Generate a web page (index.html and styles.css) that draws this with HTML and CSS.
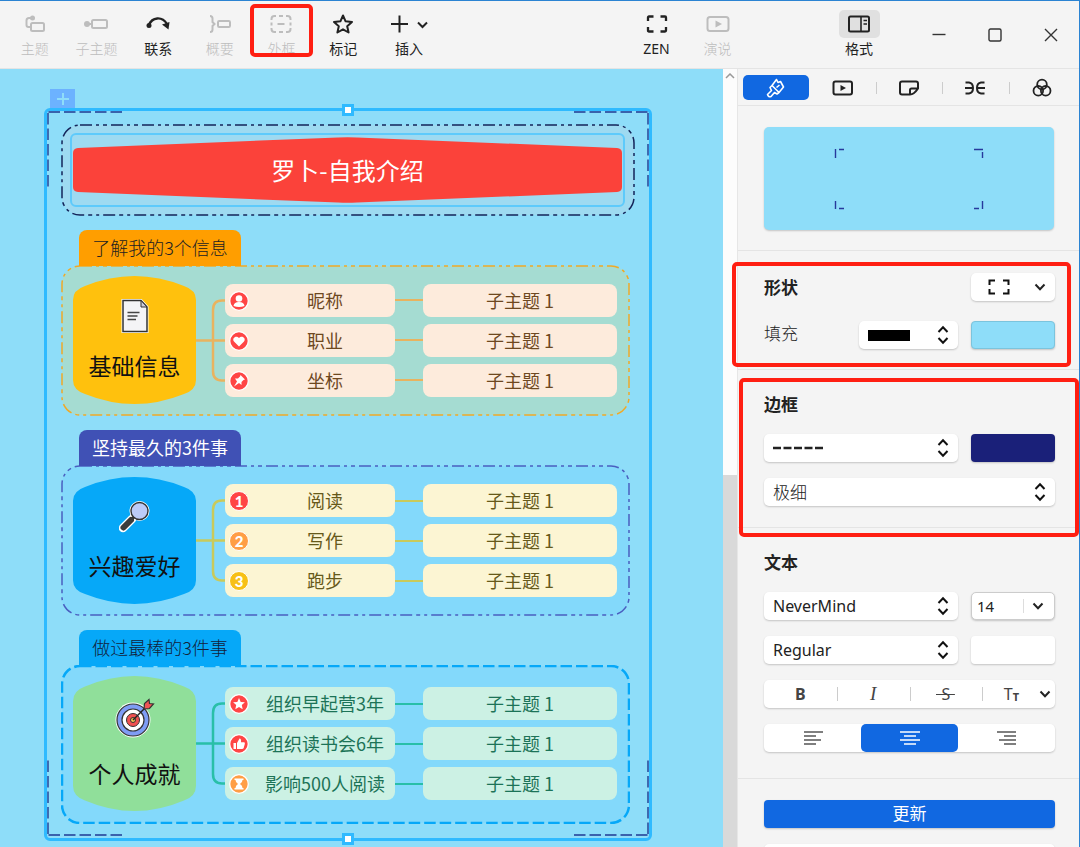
FILE: index.html
```html
<!DOCTYPE html>
<html lang="zh-CN">
<head>
<meta charset="utf-8">
<meta name="viewport" content="width=device-width, initial-scale=1">
<title>罗卜-自我介绍</title>
<link rel="stylesheet" href="styles.css">
</head>
<body>
<svg class="defs" aria-hidden="true">
  <symbol id="updown" viewBox="0 0 12 20"><path d="M1.500 7 6 2.300 10.500 7M1.500 13 6 17.700 10.500 13" fill="none" stroke="#111" stroke-width="2"/></symbol>
  <symbol id="down" viewBox="0 0 12 8"><path d="M1.500 1.500 6 6.200 10.500 1.500" fill="none" stroke="#222" stroke-width="2"/></symbol>
  <symbol id="barrel" viewBox="0 0 123 128" preserveAspectRatio="none"><path d="M12 10Q61.500-10 111 10 123 14 123 24V104Q123 114 111 118 61.500 138 12 118 0 114 0 104V24Q0 14 12 10Z" fill="currentColor"/></symbol>
  <symbol id="bracket" viewBox="0 0 29 113"><path d="M0 56.500H29M29 16.500H26Q17 16.500 17 26V87Q17 96.500 26 96.500H29" fill="none" stroke="currentColor" stroke-width="2.500"/></symbol>
  <symbol id="disc" viewBox="0 0 20 20"><circle cx="10" cy="10" r="9.300" fill="currentColor" stroke="#fff" stroke-width="1.300"/></symbol>
</svg>

<div class="app">
  <header class="toolbar">
    <nav class="tools">
      <button class="tool off"><svg width="22" height="20" viewBox="0 0 22 20"><path d="M7 13H4.500Q2.500 13 2.500 11V6.500Q2.500 4 5 4H8" /><rect x="7" y="9" width="13" height="8" rx="1.500"/><circle class="dot" cx="8.500" cy="4" r="2.500"/></svg><span>主题</span></button>
      <button class="tool off"><svg width="26" height="20" viewBox="0 0 26 20"><path d="M4 10H9"/><rect x="9" y="6" width="15" height="8" rx="1.500"/><circle class="dot" cx="4" cy="10" r="3"/></svg><span>子主题</span></button>
      <button class="tool"><svg width="26" height="20" viewBox="0 0 26 20"><path d="M4 11C7 3 17 2 22 10" stroke-width="2.300"/><circle class="dot" cx="4" cy="11.500" r="2.500"/><path class="dot" d="M17 10.500 24.500 8 23.500 15.500Z"/></svg><span>联系</span></button>
      <button class="tool off"><svg width="24" height="20" viewBox="0 0 24 20"><path d="M2 2Q4.500 2 4.500 4.500V8L6.500 10 4.500 12V15.500Q4.500 18 2 18"/><rect x="10" y="7" width="12" height="6" rx="1.200"/></svg><span>概要</span></button>
      <button class="tool off marked"><svg width="22" height="20" viewBox="0 0 22 20"><path d="M1.500 6V5Q1.500 2 4.500 2H6M9 2H13M16 2H17.500Q20.500 2 20.500 5V6M20.500 8.500V11.500M20.500 14V15Q20.500 18 17.500 18H16M13 18H9M6 18H4.500Q1.500 18 1.500 15V14M1.500 11.500V8.500M7.500 10H14.500"/></svg><span>外框</span></button>
      <button class="tool"><svg width="22" height="20" viewBox="0 0 22 20"><path d="M11 1.500 13.600 7.300 20 8 15.200 12.200 16.600 18.500 11 15.300 5.400 18.500 6.800 12.200 2 8 8.400 7.300Z" stroke-linejoin="round"/></svg><span>标记</span></button>
    </nav>
    <button class="tool insert"><svg width="40" height="20" viewBox="0 0 40 20"><path d="M2 10H19M10.500 1.500V18.500M29 8.500 33.500 13 38 8.500"/></svg><span>插入</span></button>
    <div class="modes">
      <button class="tool"><svg width="22" height="20" viewBox="0 0 22 20"><path d="M2 7V3.500Q2 2.500 3 2.500H7.500M14.500 2.500H19Q20 2.500 20 3.500V7M20 13V16.500Q20 17.500 19 17.500H14.500M7.500 17.500H3Q2 17.500 2 16.500V13" stroke-width="2.300"/></svg><span>ZEN</span></button>
      <button class="tool off"><svg width="24" height="20" viewBox="0 0 24 20"><rect x="1.500" y="3" width="21" height="14" rx="2.500"/><path class="dot" d="M9.500 6.500 16 10 9.500 13.500Z"/></svg><span>演说</span></button>
    </div>
    <button class="tool format"><i class="chip"><svg width="22" height="18" viewBox="0 0 22 18"><rect x="1" y="1.500" width="20" height="15" rx="1.500"/><path d="M13 2V16M15.500 5.500H19M15.500 9H19" stroke-width="1.600"/></svg></i><span>格式</span></button>
    <div class="window-buttons">
      <button aria-label="最小化"><svg width="14" height="14" viewBox="0 0 14 14"><path d="M0.500 6.500H13.500"/></svg></button>
      <button aria-label="最大化"><svg width="14" height="14" viewBox="0 0 14 14"><rect x="1" y="1" width="12" height="12" rx="1.500"/></svg></button>
      <button aria-label="关闭"><svg width="14" height="14" viewBox="0 0 14 14"><path d="M1 1 13 13M13 1 1 13"/></svg></button>
    </div>
  </header>

  <div class="work">
    <main class="canvas">
      <section class="sheet">
        <span class="add" aria-hidden="true"></span>
        <svg class="corner tl" viewBox="0 0 76 76"><path d="M1.500 1H76M1 2V76"/></svg>
        <svg class="corner tr" viewBox="0 0 76 76"><path d="M1.500 1H76M1 2V76"/></svg>
        <svg class="corner bl" viewBox="0 0 76 76"><path d="M1.500 1H76M1 2V76"/></svg>
        <svg class="corner br" viewBox="0 0 76 76"><path d="M1.500 1H76M1 2V76"/></svg>
        <span class="handle top"></span><span class="handle bottom"></span>

        <div class="headline">
          <svg class="edge dashdot"><rect rx="18"/></svg>
          <div class="headline-pick">
            <svg class="banner" viewBox="0 0 549 66" preserveAspectRatio="none"><path d="M5 11 265 .4Q274.500 0 284 .4L544 11Q549 11.500 549 16V50Q549 54.500 544 55L284 65.600Q274.500 66 265 65.600L5 55Q0 54.500 0 50V16Q0 11.500 5 11Z" fill="#fb423a"/></svg>
            <h1>罗卜-自我介绍</h1>
          </div>
        </div>

        <section class="group g1">
          <h2>了解我的3个信息</h2>
          <div class="bound">
            <svg class="edge dashdot"><rect rx="18"/></svg>
            <div class="barrel"><svg class="shape"><use href="#barrel"/></svg>
              <svg width="28" height="34" viewBox="0 0 28 34"><path d="M2 1.500H20L26 8V32.500H2Z" fill="#f4f4f6" stroke="#fff" stroke-width="3"/><path d="M2 1.500H20L26 8V32.500H2Z" fill="#f4f4f6" stroke="#333" stroke-width="1.500"/><path d="M20 1.500V8H26Z" fill="#ccd" stroke="#333"/><path d="M6.500 13.500H18.500M6.500 17H16.500M6.500 20.500H15" stroke="#444" stroke-width="1.400"/></svg>
              <h3>基础信息</h3></div>
            <svg class="bracket"><use href="#bracket"/></svg>
            <ul>
              <li><div class="topic"><svg class="mark red"><use href="#disc"/><circle cx="10" cy="7.500" r="3.300" fill="#fff"/><path d="M4.500 15Q5 11 10 11T15.500 15Q10 17 4.500 15Z" fill="#fff"/></svg>昵称</div><div class="sub">子主题 1</div></li>
              <li><div class="topic"><svg class="mark red"><use href="#disc"/><path d="M10 15.500 5 10.500C2.500 7.500 7 3.500 10 7 13 3.500 17.500 7.500 15 10.500Z" fill="#fff"/></svg>职业</div><div class="sub">子主题 1</div></li>
              <li><div class="topic"><svg class="mark red"><use href="#disc"/><path d="M11.500 4 16 8.500 14.500 9 12.500 11 12.500 14 10 12 5 15.500 8 10.500 6 7.500 9 7.500 11 5.500Z" fill="#fff"/></svg>坐标</div><div class="sub">子主题 1</div></li>
            </ul>
          </div>
        </section>

        <section class="group g2">
          <h2>坚持最久的3件事</h2>
          <div class="bound">
            <svg class="edge dashdot"><rect rx="18"/></svg>
            <div class="barrel"><svg class="shape"><use href="#barrel"/></svg>
              <svg width="32" height="34" viewBox="0 0 32 34"><path d="M13 20 4 29" stroke="#fff" stroke-width="8.500" stroke-linecap="round"/><circle cx="20.500" cy="12" r="10" fill="#fff"/><path d="M15 18 12 21" stroke="#333" stroke-width="3"/><path d="M12 21 4.500 28.500" stroke="#3b3b3b" stroke-width="6" stroke-linecap="round"/><circle cx="20.500" cy="12" r="8.500" fill="#bccbf8" stroke="#333" stroke-width="1.400"/></svg>
              <h3>兴趣爱好</h3></div>
            <svg class="bracket"><use href="#bracket"/></svg>
            <ul>
              <li><div class="topic"><span class="mark num red">1</span>阅读</div><div class="sub">子主题 1</div></li>
              <li><div class="topic"><span class="mark num orange">2</span>写作</div><div class="sub">子主题 1</div></li>
              <li><div class="topic"><span class="mark num yellow">3</span>跑步</div><div class="sub">子主题 1</div></li>
            </ul>
          </div>
        </section>

        <section class="group g3">
          <h2>做过最棒的3件事</h2>
          <div class="bound">
            <svg class="edge dash"><rect rx="18"/></svg>
            <div class="barrel"><svg class="shape"><use href="#barrel"/></svg>
              <svg width="40" height="40" viewBox="0 0 40 40"><circle cx="18" cy="22" r="17.500" fill="#fff"/><circle cx="18" cy="22" r="16" fill="#7f9cf5" stroke="#333" stroke-width="1.200"/><circle cx="18" cy="22" r="11" fill="#fff" stroke="#333" stroke-width="1.200"/><circle cx="18" cy="22" r="6.500" fill="#f05050" stroke="#333"/><circle cx="18" cy="22" r="2.500" fill="#f6c453" stroke="#333"/><path d="M18 22 33 7" stroke="#222" stroke-width="1.500"/><path d="M29 11 29.500 5.500 34 1.500 34.500 5.500 38.500 6 34.500 10.500Z" fill="#e55" stroke="#333" stroke-width="1.200"/></svg>
              <h3>个人成就</h3></div>
            <svg class="bracket"><use href="#bracket"/></svg>
            <ul>
              <li><div class="topic"><svg class="mark red"><use href="#disc"/><path d="M10 4 11.700 7.900 15.900 8.300 12.800 11.100 13.700 15.200 10 13 6.300 15.200 7.200 11.100 4.100 8.300 8.300 7.900Z" fill="#fff"/></svg>组织早起营3年</div><div class="sub">子主题 1</div></li>
              <li><div class="topic"><svg class="mark red"><use href="#disc"/><path d="M4.500 9H7V15H4.500ZM8 9 10.500 4.500Q12.500 4.500 12 8.300H15Q16.300 8.600 15.800 10L14.700 14Q14.300 15 13 15H8Z" fill="#fff"/></svg>组织读书会6年</div><div class="sub">子主题 1</div></li>
              <li><div class="topic"><svg class="mark orange"><use href="#disc"/><path d="M5.500 4.500H14.500V6H13.500Q13.500 8.500 11 10 13.500 11.500 13.500 14H14.500V15.500H5.500V14H6.500Q6.500 11.500 9 10 6.500 8.500 6.500 6H5.500Z" fill="#fff"/></svg>影响500人阅读</div><div class="sub">子主题 1</div></li>
            </ul>
          </div>
        </section>
      </section>
    </main>

    <div class="scroll"><svg width="10" height="6" viewBox="0 0 10 6"><path d="M1 5 5 1 9 5" fill="none" stroke="#999" stroke-width="1.500"/></svg><i></i></div>

    <aside class="panel">
      <nav class="tabs">
        <button class="on" aria-label="样式"><svg width="22" height="22" viewBox="0 0 22 22"><path d="M11.500 2.500 13 5.500 15.500 4.500 18.500 10 14 15.500 7 8.500ZM7 8.500 14 15.500 12 17 9.500 15.500 6 19.500Q3.500 20.500 2.500 17.500L6.500 13.500 5 10.500ZM11.500 10.500 14.500 8"/></svg></button>
        <button aria-label="演说"><svg width="22" height="18" viewBox="0 0 22 18"><rect x="1.500" y="2.500" width="18.500" height="13" rx="2"/><path d="M8.500 6 14 9 8.500 12Z" fill="currentColor" stroke="none"/></svg></button>
        <button aria-label="贴纸"><svg width="22" height="18" viewBox="0 0 22 18"><path d="M12 15.500H4Q2 15.500 2 13.500V4.500Q2 2.500 4 2.500H18Q20 2.500 20 4.500V9.500Q16 15.500 12 15.500ZM12 15.500V11Q12 9.500 13.500 9.500H20"/></svg></button>
        <button aria-label="结构"><svg width="22" height="18" viewBox="0 0 22 18"><path d="M1.500 3.500H5Q9 4 9 9T5 14.500H1.500M20.500 3.500H17Q13 4 13 9T17 14.500H20.500M1 9H9M13 9H21"/></svg></button>
        <button aria-label="配色"><svg width="20" height="20" viewBox="0 0 20 20"><circle cx="10" cy="6.500" r="4.800"/><circle cx="6.300" cy="12.800" r="4.800"/><circle cx="13.700" cy="12.800" r="4.800"/></svg></button>
      </nav>

      <div class="preview-wrap"><div class="preview"><svg width="150" height="62" viewBox="0 0 150 62"><path d="M1.500 1V10M5 1.500H10M140 1.500H149M148.500 4V10M1.500 53V61M5 60.500H10M148.500 53V61M140 60.500H145"/></svg></div></div>

      <section class="shape-block">
        <div class="row"><h4>形状</h4><button class="box short shape-pick" aria-label="形状"><svg width="22" height="16" viewBox="0 0 22 16"><path d="M1.500 6V1.500H7M1.500 10V14.500H7M15 1.500H20.500V6M15 14.500H20.500V10" fill="none" stroke="#111" stroke-width="2"/></svg><svg class="dn"><use href="#down"/></svg></button></div>
        <div class="row"><span class="name">填充</span><button class="box fill-pick" aria-label="填充样式"><i class="solid"></i><svg class="ud"><use href="#updown"/></svg></button><button class="swatch sky" aria-label="填充颜色"></button></div>
      </section>

      <section class="border-block">
        <h4>边框</h4>
        <div class="row"><button class="box grow" aria-label="线条样式"><svg width="52" height="4" viewBox="0 0 52 4"><path d="M0 2H52" stroke="#222" stroke-width="2.500" stroke-dasharray="8 2.500"/></svg><svg class="ud"><use href="#updown"/></svg></button><button class="swatch navy" aria-label="边框颜色"></button></div>
        <div class="row"><label class="box grow"><select aria-label="线条粗细" class="zh"><option>极细</option></select><svg class="ud"><use href="#updown"/></svg></label></div>
      </section>

      <section class="text-block">
        <h4>文本</h4>
        <div class="row"><label class="box grow"><select aria-label="字体"><option>NeverMind</option></select><svg class="ud"><use href="#updown"/></svg></label><label class="box short size"><input aria-label="字号" value="14"><svg class="dn"><use href="#down"/></svg></label></div>
        <div class="row"><label class="box grow"><select aria-label="字重"><option>Regular</option></select><svg class="ud"><use href="#updown"/></svg></label><button class="swatch white" aria-label="文本颜色"></button></div>
        <div class="seg styles"><button><b>B</b></button><button><em>I</em></button><button><s>S</s></button><button>T<small>T</small><svg class="dn"><use href="#down"/></svg></button></div>
        <div class="seg aligns">
          <button aria-label="左对齐"><svg width="20" height="16" viewBox="0 0 20 16"><path d="M1 2H20M1 6H13M1 10H18M1 14H13"/></svg></button>
          <button aria-label="居中" class="on"><svg width="20" height="16" viewBox="0 0 20 16"><path d="M0 2H20M4 6H16M0 10H20M4 14H16"/></svg></button>
          <button aria-label="右对齐"><svg width="20" height="16" viewBox="0 0 20 16"><path d="M0 2H19M7 6H19M2 10H19M7 14H19"/></svg></button>
        </div>
      </section>

      <section class="update-block">
        <button class="update">更新</button>
        <button class="box reset" aria-label="重设样式"></button>
      </section>
    </aside>
  </div>
</div>
</body>
</html>
```

FILE: styles.css
```css
* { box-sizing: border-box; }
body { margin: 0; overflow: hidden; font-family: "Noto Sans", "Noto Sans CJK SC", sans-serif; color: #222; }
button, input, select { font: inherit; color: inherit; border: 0; background: none; padding: 0; margin: 0; outline: 0; }
h1, h2, h3, h4, ul { margin: 0; padding: 0; font-weight: 400; list-style: none; }
svg { display: block; flex: none; }
.defs { position: absolute; width: 0; height: 0; }

.app { display: flex; flex-direction: column; height: 100vh; background: #f4f4f4; border-top: 1px solid #2b83d2; border-right: 1px solid #2b83d2; }

/* toolbar */
.toolbar { display: flex; height: 68px; flex: none; padding-left: 4px; border-bottom: 1px solid #e4e4e4; }
.tools { display: grid; grid-template-columns: repeat(6, 1fr); width: 370px; }
.tool { display: flex; flex-direction: column; align-items: center; padding-top: 13px; gap: 5px; font-size: 14px; line-height: 20px; }
.tool svg { fill: none; stroke: currentColor; stroke-width: 2; }
.tool .dot { fill: currentColor; stroke: none; }
.tool.off { color: #bdbdbd; font-weight: 300; }
.insert { width: 70px; }
.modes { display: flex; margin-left: auto; }
.modes .tool { width: 61px; }
.format { width: 62px; margin-left: 80px; padding-top: 9px; gap: 1px; }
.chip { display: grid; place-items: center; width: 41px; height: 28px; border-radius: 5px; background: #e0e0e0; }
.window-buttons { display: flex; margin-left: 21px; }
.window-buttons button { display: grid; place-items: center; width: 56px; }
.window-buttons svg { fill: none; stroke: #333; stroke-width: 1.400; }

.marked, .shape-block, .border-block { position: relative; }
.marked::after, .shape-block::after, .border-block::after { content: ""; position: absolute; border: 4px solid #ff1f12; border-radius: 5px; pointer-events: none; z-index: 2; }
.marked::after { inset: 3px -1px 11px -1px; }
.shape-block::after { inset: 11px 8px 2px -6px; }
.border-block::after { inset: 8px 0 -10px 1px; }

.work { display: flex; flex: 1; min-height: 0; overflow: hidden; }

/* canvas */
.canvas { position: relative; flex: 1; min-width: 0; overflow: hidden; background: #8eddf9; }
.sheet { position: absolute; left: 44px; top: 39px; width: 608px; padding: 13px 14px 14px; display: flex; flex-direction: column; gap: 14px; border: 3px solid #2fbaff; border-radius: 6px; }
.add { position: absolute; left: 3px; top: -22px; width: 25px; height: 19px; background: linear-gradient(#8eddf9, #8eddf9) center / 12px 2px no-repeat, linear-gradient(#8eddf9, #8eddf9) center / 2px 12px no-repeat, #6cb2ff; }
.handle { position: absolute; left: 295px; width: 12px; height: 12px; border: 3px solid #2fbaff; background: #fff; }
.handle.top { top: -7px; }
.handle.bottom { bottom: -7px; }
.corner { position: absolute; width: 76px; height: 76px; fill: none; stroke: #1f3a93; stroke-width: 1.400; stroke-dasharray: 11.500 4; }
.tl { left: 0; top: 0; }
.tr { right: 0; top: 0; transform: scaleX(-1); }
.bl { left: 0; bottom: 2px; transform: scaleY(-1); }
.br { right: 0; bottom: 2px; transform: scale(-1); }

.edge { position: absolute; inset: 0; width: 100%; height: 100%; }
.edge rect { x: 1px; y: 1px; width: calc(100% - 2px); height: calc(100% - 2px); fill: var(--area); stroke: var(--line); stroke-width: 1.500; }
.dashdot rect { stroke-dasharray: 12 4 3 4 4 4; }
.dash rect { stroke-width: 2.500; stroke-dasharray: 11.500 4; }

.headline { --area: #9edaf1; --line: #14255a; position: relative; padding: 9px 10px 9px 9px; }
.headline-pick { position: relative; display: grid; padding: 2px 1px; border: 2px solid #5ecafb; border-radius: 6px; }
.headline-pick > * { grid-area: 1 / 1; }
.banner { width: 100%; height: 66px; }
h1 { place-self: center; font-family: "Noto Sans CJK SC", sans-serif; font-size: 24px; line-height: 36px; font-weight: 400; color: #fff; }

.group { width: 569px; font-family: "Noto Sans CJK SC", sans-serif; font-weight: 300; }
.group h2 { position: relative; z-index: 2; width: 162px; height: 36px; margin: 0 0 -1px 18px; border-radius: 8px 8px 0 0; background: var(--tab); color: var(--tab-text); font-size: 18px; line-height: 34px; font-weight: 300; text-align: center; }
.bound { position: relative; display: flex; align-items: center; padding: 11px 13px 12px 12px; }
.bound > * { z-index: 1; }
.bound > .edge { z-index: 0; }
.barrel { position: relative; display: flex; flex-direction: column; align-items: center; justify-content: center; gap: 15px; width: 123px; height: 128px; color: var(--node); }
.barrel > * { z-index: 1; }
.barrel > .shape { position: absolute; z-index: 0; width: 100%; height: 100%; }
.barrel h3 { font-size: 23px; line-height: 34px; color: #111; }
.bracket { width: 29px; height: 113px; color: var(--wire); }
.bound ul { flex: 1; display: grid; gap: 7px; color: var(--ink); font-size: 18px; line-height: 33px; text-align: center; }
.bound li { display: flex; justify-content: space-between; background: linear-gradient(var(--wire), var(--wire)) center / 100% 2px no-repeat; }
.topic { position: relative; width: 170px; padding-left: 30px; border-radius: 8px; background: var(--pill); }
.sub { width: 194px; border-radius: 8px; background: var(--pill); }
.mark { position: absolute; left: 4px; top: 7px; width: 20px; height: 20px; }
.num { border: 1px solid #fff; border-radius: 50%; background: currentColor; font: 900 15px/18px Lato, sans-serif; }
.num::first-letter { color: #fff; }
.red { color: #ff4545; }
.orange { color: #ff9e45; }
.yellow { color: #f7c016; }
.g1 { --tab: #ff9e00; --tab-text: #222; --area: #a5dcd2; --line: #f0a927; --node: #ffc10d; --wire: #e9b35f; --pill: #fdebdc; --ink: #6e481f; }
.g2 { --tab: #4051b5; --tab-text: #fff; --area: #83d9fb; --line: #4a5fc0; --node: #06a8f8; --wire: #c9ca5b; --pill: #fcf5d3; --ink: #66591a; }
.g3 { --tab: #06a8f8; --tab-text: #12233c; --area: #83d9fb; --line: #06a8f8; --node: #90df9a; --wire: #29bfa8; --pill: #ccf1e4; --ink: #1c7357; }
.g2 h2 { font-weight: 400; }
.g2 .bound { padding-top: 12px; }
.g2 .barrel { height: 127px; }
.g3 .barrel { height: 135px; gap: 18px; }
.g3 .bound { padding-bottom: 13px; }

/* scrollbar */
.scroll { display: flex; flex-direction: column; align-items: center; width: 14px; flex: none; padding-top: 4px; background: #fcfcfc; }
.scroll i { width: 100%; flex: 0 1 48%; margin-top: auto; background: #d9d9d9; }

/* format panel */
.panel { width: 342px; flex: none; border-left: 1px solid #e6e6e6; font-size: 16px; }
.tabs { display: grid; grid-template-columns: repeat(5, 1fr); height: 37px; padding: 6px 4px 5px 5px; border-bottom: 1px solid #e4e4e4; }
.tabs button { display: grid; place-items: center; }
.tabs button:nth-child(n+3) { background: linear-gradient(#ccc, #ccc) left / 1px 12px no-repeat; }
.tabs .on { border-radius: 5px; background: #1168e1; color: #fff; }
.tabs svg { fill: none; stroke: currentColor; stroke-width: 2; stroke-linejoin: round; }
.tabs .on svg { stroke-width: 1.600; }
.tabs button:last-child svg { stroke-width: 1.800; }
.preview-wrap { padding: 21px 25px 20px 26px; border-bottom: 1px solid #e4e4e4; }
.preview { display: grid; place-items: center; height: 103px; border-radius: 5px; background: #8eddf9; box-shadow: 0 1px 2px #0003; }
.preview svg { fill: none; stroke: #27399c; stroke-width: 1.400; }

.panel section { display: flex; flex-direction: column; gap: 16px; padding: 20px 24px 20px 26px; border-bottom: 1px solid #e4e4e4; }
.panel .shape-block { gap: 20px; padding-top: 22px; }
.panel .border-block { padding-bottom: 21px; }
.panel .text-block { padding-bottom: 26px; }
.panel .update-block { padding-top: 21px; border: 0; }
h4 { font-family: "Noto Sans CJK SC", sans-serif; font-size: 17px; line-height: 27px; height: 28px; font-weight: 700; }
.row { display: flex; align-items: center; gap: 13px; height: 28px; }
.row h4 { margin-right: auto; }
.name { margin-right: auto; font-size: 17px; line-height: 26px; height: 28px; font-weight: 300; }
.box { display: flex; align-items: center; justify-content: space-between; height: 28px; padding: 0 9px; border-radius: 5px; background: #fff; box-shadow: 0 1px 2px #0003; }
.short, .swatch { width: 84px; flex: none; }
.grow { flex: 1; min-width: 0; }
.fill-pick { width: 99px; }
.shape-pick { padding-left: 17px; }
.box select, .box input { flex: 1; min-width: 0; width: 100%; height: 28px; appearance: none; }
.box .zh { font-size: 17px; font-weight: 300; }
.ud { width: 12px; height: 20px; }
.dn { width: 12px; height: 8px; }
.solid { width: 42px; height: 11px; background: #000; }
.swatch { height: 28px; border-radius: 4px; box-shadow: 0 1px 2px #0003; }
.sky { background: #8eddf9; border: 1px solid #7bc4dd; }
.navy { background: #1a2079; }
.white { background: #fff; }
.size { padding: 0 10px 0 5px; border: 1px solid #ccc; font-size: 15px; background: linear-gradient(#ddd, #ddd) 51px center / 1px 14px no-repeat #fff; }
.seg { display: grid; grid-auto-flow: column; grid-auto-columns: 1fr; height: 28px; border-radius: 5px; background: #fff; box-shadow: 0 1px 2px #0003; }
.seg button { display: flex; align-items: center; justify-content: center; color: #444; }
.styles button + button { background: linear-gradient(#ccc, #ccc) left / 1px 14px no-repeat; }
.styles em { font-family: "Liberation Serif", serif; font-size: 19px; }
.styles s { padding: 0 5px; text-decoration: none; background: linear-gradient(#444, #444) center / 100% 1px no-repeat; }
.styles small { font-size: 11px; font-weight: 700; padding-top: 4px; }
.styles .dn { margin-left: 20px; }
.styles button:last-child { justify-content: flex-end; padding-right: 4px; }
.aligns svg { stroke: #555; stroke-width: 1.600; }
.aligns .on { border-radius: 5px; background: #1168e1; }
.aligns .on svg { stroke: #fff; }
.update { height: 28px; border-radius: 4px; background: #1168e1; color: #fff; font-size: 17px; line-height: 28px; box-shadow: 0 1px 2px #0003; }
```
